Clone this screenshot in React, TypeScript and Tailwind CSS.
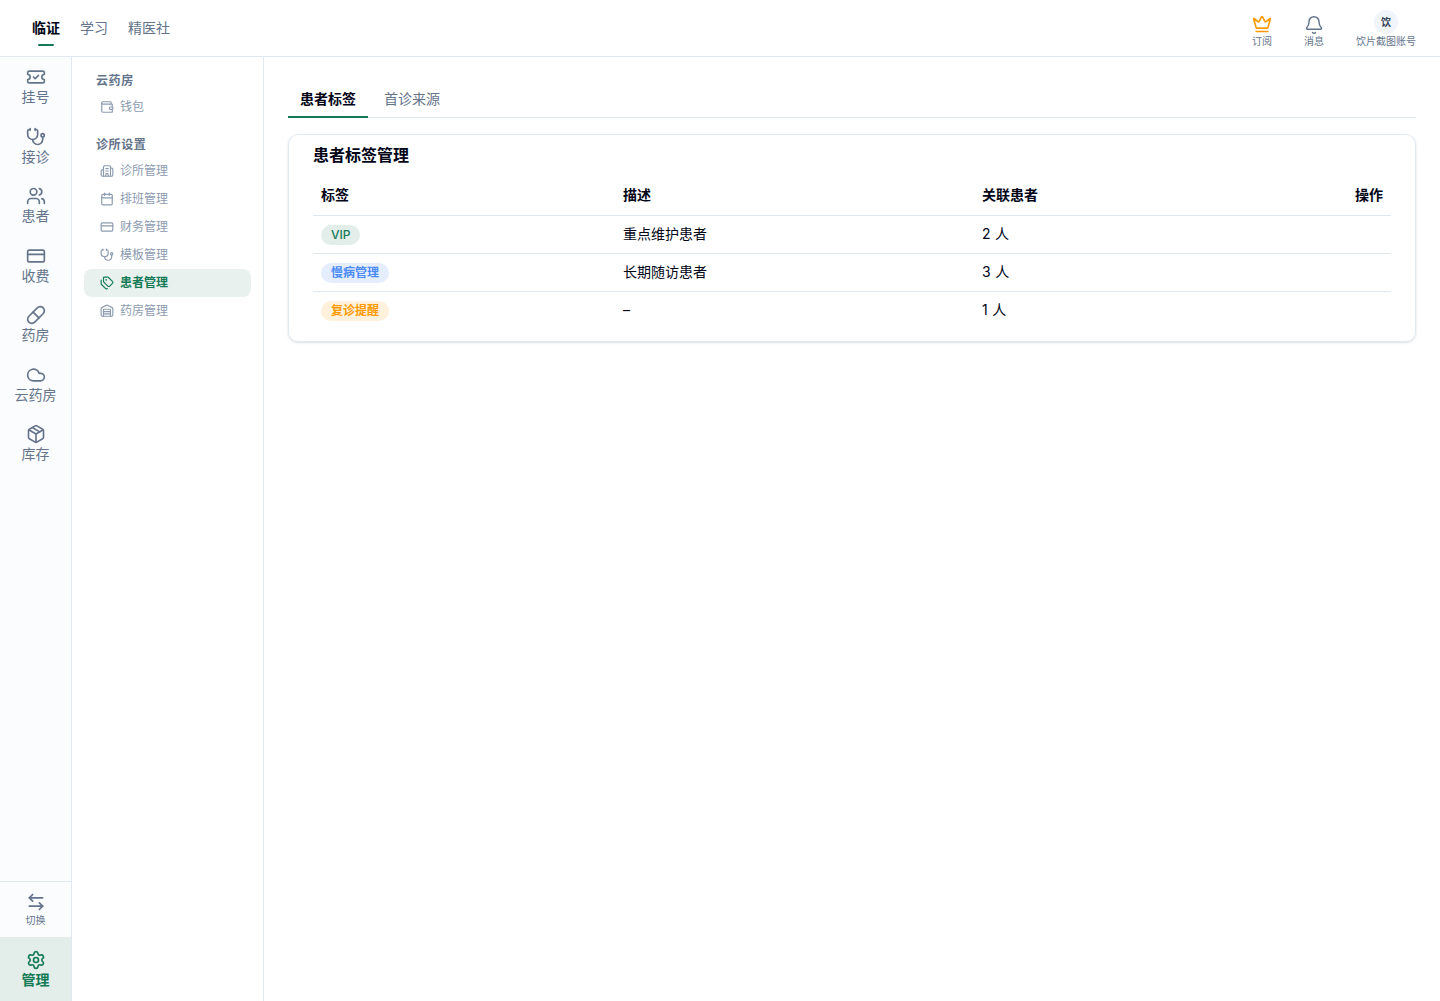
import {
    ArrowLeftRight, Bell, Building2, Calendar, Cloud, CreditCard, Crown, Package,
    Pill, Settings, Stethoscope, Tags, TicketCheck, Users, Wallet, Warehouse,
} from 'lucide-react';
import type { LucideIcon } from 'lucide-react';
import clsx from 'clsx';

interface NavItem {
    label: string;
    icon: LucideIcon;
    active?: boolean;
}

const railItems: NavItem[] = [
    { label: '挂号', icon: TicketCheck },
    { label: '接诊', icon: Stethoscope },
    { label: '患者', icon: Users },
    { label: '收费', icon: CreditCard },
    { label: '药房', icon: Pill },
    { label: '云药房', icon: Cloud },
    { label: '库存', icon: Package },
];

const menuGroups: { title: string; items: NavItem[] }[] = [
    { title: '云药房', items: [{ label: '钱包', icon: Wallet }] },
    {
        title: '诊所设置',
        items: [
            { label: '诊所管理', icon: Building2 },
            { label: '排班管理', icon: Calendar },
            { label: '财务管理', icon: CreditCard },
            { label: '模板管理', icon: Stethoscope },
            { label: '患者管理', icon: Tags, active: true },
            { label: '药房管理', icon: Warehouse },
        ],
    },
];

const tags = [
    { name: 'VIP', desc: '重点维护患者', count: 2, style: 'bg-[#e3eeeb] font-medium text-[#147a56]' },
    { name: '慢病管理', desc: '长期随访患者', count: 3, style: 'bg-[#e5eefe] font-semibold text-[#4a8af7]' },
    { name: '复诊提醒', desc: '–', count: 1, style: 'bg-[#fff1dc] font-semibold text-[#fd9a00]' },
];

function Header() {
    return (
        <header className="flex h-[57px] shrink-0 items-center justify-between border-b border-[#e2e8f0] pr-6 pl-8">
            <nav className="flex h-full items-center gap-5 text-sm text-[#64748b]">
                <a className="relative font-semibold text-[#020617]">
                    临证
                    <span className="absolute -bottom-2 left-1/2 h-0.5 w-4 -translate-x-1/2 rounded-full bg-[#147a56]" />
                </a>
                <a>学习</a>
                <a>精医社</a>
            </nav>
            <div className="flex h-full items-end gap-8 pb-[9px] text-[10px] leading-[12px] text-[#64748b]">
                <div className="flex flex-col items-center">
                    <Crown size={20} className="text-[#fd9a00]" />
                    <span className="pt-px">订阅</span>
                </div>
                <div className="flex flex-col items-center">
                    <Bell size={20} strokeWidth={1.75} className="-mb-px" />
                    <span className="pt-px">消息</span>
                </div>
                <div className="flex flex-col items-center">
                    <span className="flex size-6 items-center justify-center rounded-full bg-slate-100 font-semibold text-slate-700">饮</span>
                    <span className="pt-px">饮片截图账号</span>
                </div>
            </div>
        </header>
    );
}

function Rail() {
    return (
        <aside className="flex w-[72px] shrink-0 flex-col border-r border-[#e2e8f0] bg-[#fbfcfe] text-[#64748b]">
            {railItems.map(({ label, icon: Icon }) => (
                <a key={label} className="flex flex-col items-center gap-px pt-2.5 pb-[11px] text-sm leading-[17.5px]">
                    <Icon size={20} />
                    {label}
                </a>
            ))}
            <a className="mt-auto flex h-14 flex-col items-center gap-0.5 border-t border-[#e2e8f0] pt-2.5 text-[10px] leading-[12.5px]">
                <ArrowLeftRight size={20} />
                切换
            </a>
            <a className="flex h-16 flex-col items-center gap-px bg-[#e3eeeb] pt-[13px] text-sm leading-[17.5px] font-semibold text-[#147a56]">
                <Settings size={20} />
                管理
            </a>
        </aside>
    );
}

function Menu() {
    return (
        <aside className="flex w-48 shrink-0 flex-col gap-3 border-r border-[#e2e8f0] px-3 pt-3">
            {menuGroups.map(group => (
                <div key={group.title}>
                    <h3 className="px-3 py-1 text-xs font-semibold tracking-[0.05em] text-[#64748b]">{group.title}</h3>
                    {group.items.map(({ label, icon: Icon, active }) => (
                        <a
                            key={label}
                            className={clsx(
                                'flex h-7 items-center gap-1.5 rounded-lg px-4 text-xs',
                                active ? 'bg-[#e8f1ee] font-semibold text-[#147a56]' : 'text-[#8c9bb0]',
                            )}
                        >
                            <Icon size={14} />
                            {label}
                        </a>
                    ))}
                </div>
            ))}
        </aside>
    );
}

function TagTable() {
    return (
        <table className="w-full table-fixed text-left text-sm">
            <thead>
                <tr className="h-10 border-b border-[#e2e8f0]">
                    <th className="w-[302px] px-2 font-semibold">标签</th>
                    <th className="w-[359px] px-2 font-semibold">描述</th>
                    <th className="px-2 font-semibold">关联患者</th>
                    <th className="px-2 text-right font-semibold">操作</th>
                </tr>
            </thead>
            <tbody>
                {tags.map(tag => (
                    <tr key={tag.name} className="h-[38px] border-b border-[#e2e8f0] last:border-0">
                        <td className="px-2 pt-0.5">
                            <span className={clsx('flex h-5 w-fit items-center rounded-full px-2.5 text-xs', tag.style)}>
                                {tag.name}
                            </span>
                        </td>
                        <td className="px-2">{tag.desc}</td>
                        <td className="px-2 tracking-[0.02em]">{tag.count} 人</td>
                        <td />
                    </tr>
                ))}
            </tbody>
        </table>
    );
}

export default function App() {
    return (
        <div className="flex h-screen flex-col bg-white font-['Inter','Noto_Sans_CJK_SC',sans-serif] text-[#020617] antialiased">
            <Header />
            <div className="flex min-h-0 flex-1">
                <Rail />
                <Menu />
                <main className="min-w-0 flex-1 p-6">
                    <div className="flex h-[37px] gap-1 border-b border-[#e2e8f0] text-sm text-[#64748b]">
                        <a className="h-[37px] border-b-2 border-[#147a56] px-3 pt-2 font-semibold text-[#020617]">患者标签</a>
                        <a className="px-3 pt-2">首诊来源</a>
                    </div>
                    <section className="mt-4 rounded-[10px] border border-[#e2e8f0] px-6 pt-2 pb-3 shadow-sm">
                        <h2 className="mb-2 text-base font-semibold">患者标签管理</h2>
                        <TagTable />
                    </section>
                </main>
            </div>
        </div>
    );
}
